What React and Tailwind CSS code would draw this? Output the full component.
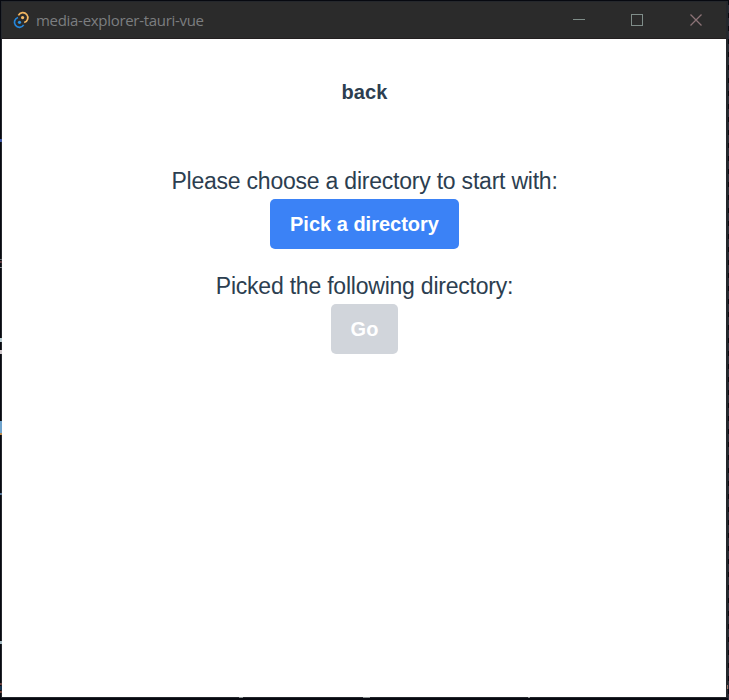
const leftFlecks = [
  { top: 139, h: 3, color: '#4059a8' },
  { top: 259, h: 1, color: '#6b7078' },
  { top: 261, h: 2, color: '#5d3b40' },
  { top: 267, h: 1, color: '#80868c' },
  { top: 338, h: 4, color: '#b9cdd2' },
  { top: 350, h: 4, color: '#d0c8cc' },
  { top: 421, h: 12, color: '#6fa3cc' },
  { top: 433, h: 2, color: '#b98a4c' },
  { top: 493, h: 2, color: '#58789a' },
  { top: 641, h: 3, color: '#a3b8c0' },
  { top: 683, h: 2, color: '#6b4240' },
  { top: 686, h: 4, color: '#17334f' },
  { top: 691, h: 2, color: '#70443c' },
];

const bottomFlecks = [
  { left: 239, w: 4 },
  { left: 363, w: 7 },
  { left: 528, w: 2 },
];

function TauriLogo() {
  return (
    <svg className="h-5 w-5" viewBox="0 0 20 20" fill="none">
      <path d="M7.4 5.4A5 5 0 1 1 13.2 12.5" stroke="#f2b661" strokeWidth="1.7" />
      <path d="M7 7.5A5 5 0 1 0 12.7 14.9" stroke="#2587dc" strokeWidth="1.7" />
      <circle cx="11.6" cy="7.6" r="1.6" fill="#f5bc68" />
      <circle cx="8.5" cy="12.3" r="1.6" fill="#2b94e6" />
    </svg>
  );
}

function TitleBar() {
  return (
    <header className="flex h-[37px] shrink-0 items-center border-b border-[#231f20] bg-[#2b2b2b]">
      <div className="ml-[9px] flex items-center">
        <TauriLogo />
        <span className="ml-[5px] whitespace-nowrap font-['Open_Sans','Noto_Sans',sans-serif] text-[15px] leading-5 tracking-[-0.3px] text-[#7c7e80]">
          media-explorer-tauri-vue
        </span>
      </div>
      <svg className="ml-auto mr-[23px] h-3 w-[130px]" viewBox="0 0 130 12" fill="none" shapeRendering="crispEdges">
        <path d="M0 5.5H12" stroke="#7f8d89" />
        <path d="M58.5 .5H69.5V11.5H58.5Z" stroke="#7f8d89" />
        <path d="M117.5 .5L128.5 11.5M128.5 .5L117.5 11.5" stroke="#8c7377" strokeWidth="1.3" shapeRendering="auto" />
      </svg>
    </header>
  );
}

export default function App() {
  return (
    <div className="relative h-[700px] w-[729px] overflow-hidden bg-[#070910] pl-px pt-px font-['Liberation_Sans',Arial,sans-serif]">
      <div className="flex h-[697px] w-[727px] flex-col border border-[#24272c] border-r-2 bg-white">
        <TitleBar />
        <main className="flex flex-col items-center pl-px pt-[38px] text-[#2c3e50]">
          <a className="text-xl font-bold leading-[30px] tracking-[0.05px]">back</a>
          <p className="mt-[56px] text-[23px] leading-9 tracking-[-0.22px]">Please choose a directory to start with:</p>
          <button className="h-[50px] w-[189px] rounded-[5px] bg-[#3b82f6] text-xl font-bold text-white">
            Pick a directory
          </button>
          <p className="mt-[19px] text-[23px] leading-9 tracking-[-0.22px]">Picked the following directory:</p>
          <button disabled className="h-[50px] w-[67px] rounded-[5px] bg-[#d1d5db] text-xl font-bold text-white">
            Go
          </button>
        </main>
      </div>
      <div className="absolute right-0 top-0 h-full w-px bg-[repeating-linear-gradient(to_bottom,#070910_0,#070910_5px,#252a33_5px,#252a33_13px)]" />
      {leftFlecks.map((f) => (
        <i key={f.top} className="absolute left-0 w-0.5" style={{ top: f.top, height: f.h, background: f.color }} />
      ))}
      {bottomFlecks.map((f) => (
        <i key={f.left} className="absolute top-[697px] h-px bg-[#8b9293]" style={{ left: f.left, width: f.w }} />
      ))}
      <i className="absolute left-[727px] top-[685px] h-1 w-px bg-[#9b7668]" />
    </div>
  );
}
